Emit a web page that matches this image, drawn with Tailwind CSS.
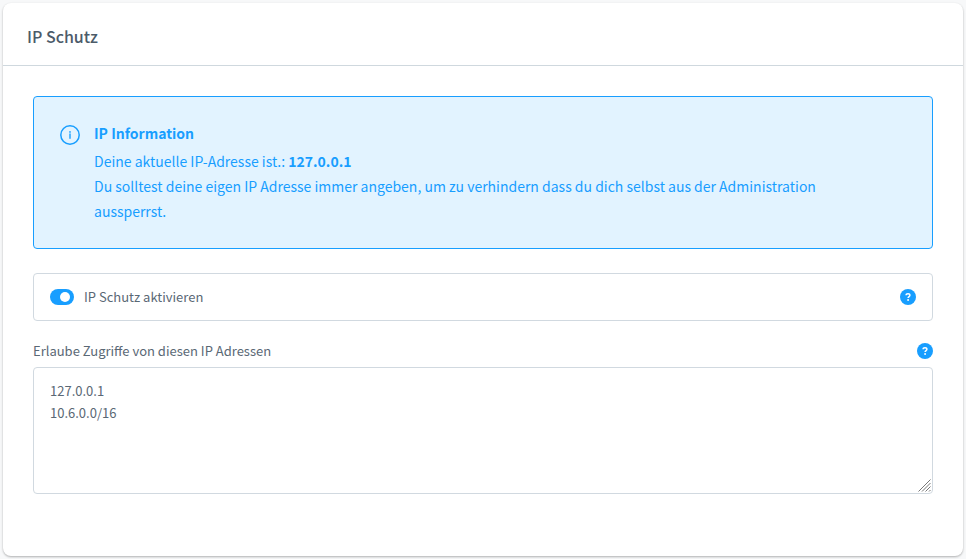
<!DOCTYPE html>
<html lang="de">
<head>
<meta charset="utf-8">
<meta name="viewport" content="width=device-width, initial-scale=1">
<title>IP Schutz</title>
<script src="https://cdn.jsdelivr.net/npm/@tailwindcss/browser@4"></script>
</head>
<body class="min-h-screen bg-[#f7f8f9] p-[3px] font-['Noto_Sans_CJK_SC','Noto_Sans',sans-serif] text-[#5a6875]">
<main class="min-h-[553px] rounded-lg bg-white shadow-[0_1px_2px_rgba(0,0,0,0.2),0_1px_3px_rgba(0,0,0,0.1)]">
  <header class="border-b border-[#cfd8de] px-6 pt-5 pb-4">
    <h1 class="text-[16px] leading-[26px] font-medium text-[#4c5b69]">IP Schutz</h1>
  </header>
  <div class="p-[30px]">
    <section class="flex gap-3.5 rounded border border-[#189eff] bg-[#e2f3ff] pt-6 pr-16 pb-6 pl-[26px] text-[14px] leading-[25px] text-[#189eff]">
      <svg class="mt-1 size-5 shrink-0" viewBox="0 0 20 20" fill="none" stroke="currentColor" aria-hidden="true">
        <circle cx="10" cy="10" r="9.2" stroke-width="1.5"/>
        <path d="M10 9v4.3" stroke-width="1.4" stroke-linecap="round"/>
        <circle cx="10" cy="6.9" r=".85" fill="currentColor" stroke="none"/>
      </svg>
      <div>
        <h2 class="mb-[3px] font-bold">IP Information</h2>
        <p>Deine aktuelle IP-Adresse ist.: <strong class="font-bold">127.0.0.1</strong><br>Du solltest deine eigen IP Adresse immer angeben, um zu verhindern dass du dich selbst aus der Administration aussperrst.</p>
      </div>
    </section>

    <div class="mt-6 flex items-center rounded border border-[#d1d9e0] px-4 py-3">
      <input id="active" type="checkbox" role="switch" checked class="relative h-4 w-6 appearance-none rounded-full bg-[#d1d9e0] before:absolute before:top-[3px] before:left-[3px] before:size-[10px] before:rounded-full before:bg-white checked:bg-[#189eff] checked:before:left-[10px]">
      <label for="active" class="ml-2.5 grow text-[13px] leading-[22px]">IP Schutz aktivieren</label>
      <button type="button" aria-label="Hilfe zu IP Schutz" class="size-4 rounded-full bg-[#189eff] text-white">
        <svg class="size-4" viewBox="0 0 16 16" fill="none" stroke="currentColor" aria-hidden="true"><path d="M6.1 6.3C6.1 4.1 9.9 4.1 9.9 6.3C9.9 7.6 8.1 7.5 8.1 9.1" stroke-width="1.5"/><circle cx="8.1" cy="11" r=".95" fill="currentColor" stroke="none"/></svg>
      </button>
    </div>

    <div class="mt-5 mb-1.5 flex items-center justify-between">
      <label for="ips" class="text-[13px] leading-5">Erlaube Zugriffe von diesen IP Adressen</label>
      <button type="button" aria-label="Hilfe zu IP Adressen" class="size-4 rounded-full bg-[#189eff] text-white">
        <svg class="size-4" viewBox="0 0 16 16" fill="none" stroke="currentColor" aria-hidden="true"><path d="M6.1 6.3C6.1 4.1 9.9 4.1 9.9 6.3C9.9 7.6 8.1 7.5 8.1 9.1" stroke-width="1.5"/><circle cx="8.1" cy="11" r=".95" fill="currentColor" stroke="none"/></svg>
      </button>
    </div>
    <div class="relative">
      <textarea id="ips" class="block h-[127px] w-full resize-y rounded border border-[#d1d9e0] px-4 py-3 text-[13px] leading-[22px] [&::-webkit-resizer]:bg-transparent">127.0.0.1
10.6.0.0/16</textarea>
      <svg class="pointer-events-none absolute right-0.5 bottom-0.5 h-[13px] w-[13px]" viewBox="0 0 13 13" stroke="#777" stroke-width="1" aria-hidden="true"><path d="M.5 12.5l12-12M4 12.5l8.5-8.5M7.5 12.5l5-5M11 12.5l1.5-1.5"/></svg>
    </div>
  </div>
</main>
</body>
</html>
